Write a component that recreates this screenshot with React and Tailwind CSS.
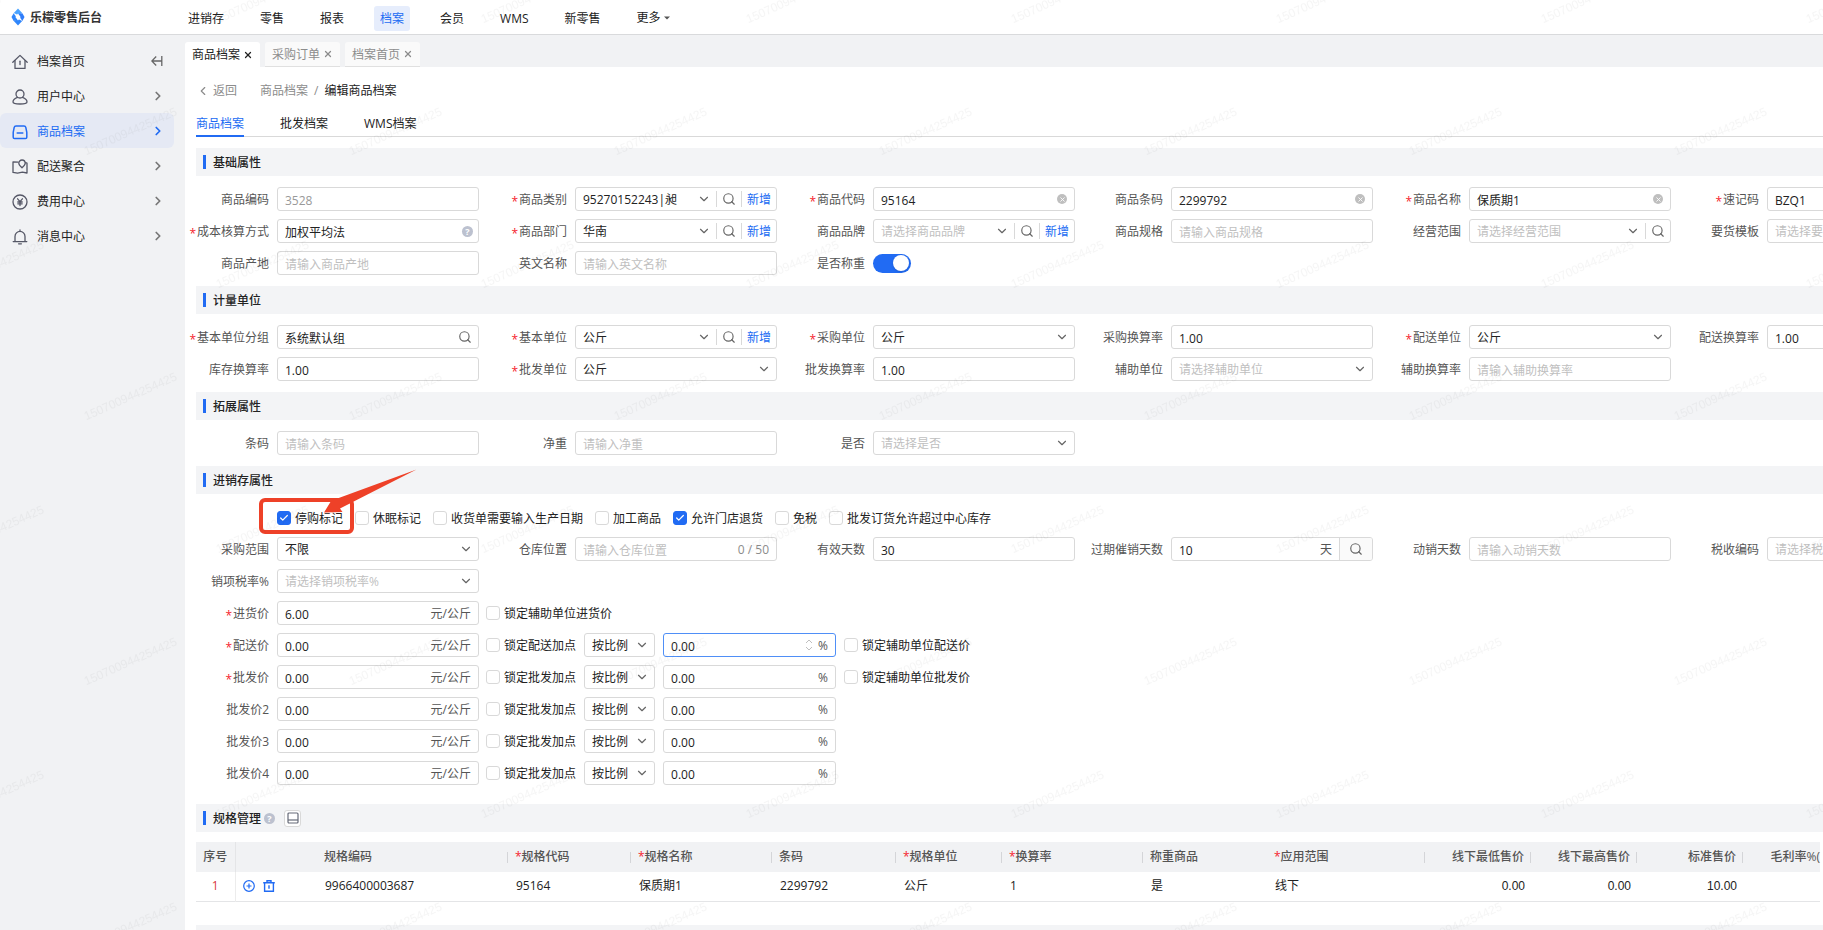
import { useId, useState } from "react";
import { ChevronDown, ChevronLeft, ChevronRight, Check, Search, X } from "lucide-react";

const NAV = ["进销存", "零售", "报表", "档案", "会员", "WMS", "新零售"];

const SIDE = [
  { label: "档案首页", icon: HomeIcon },
  { label: "用户中心", icon: UserIcon },
  { label: "商品档案", icon: BoxIcon, active: true },
  { label: "配送聚合", icon: MapIcon },
  { label: "费用中心", icon: YenIcon },
  { label: "消息中心", icon: BellIcon },
];

const PAGE_TABS = ["商品档案", "采购订单", "档案首页"];

const BASE_FIELDS = [
  { label: "商品编码", value: "3528", disabled: true },
  { label: "商品类别", required: true, kind: "select", value: "95270152243|昶", search: true, add: true },
  { label: "商品代码", required: true, value: "95164", clear: true },
  { label: "商品条码", value: "2299792", clear: true },
  { label: "商品名称", required: true, value: "保质期1", clear: true },
  { label: "速记码", required: true, value: "BZQ1" },
  { label: "成本核算方式", required: true, value: "加权平均法", help: true },
  { label: "商品部门", required: true, kind: "select", value: "华南", search: true, add: true },
  { label: "商品品牌", kind: "select", placeholder: "请选择商品品牌", search: true, add: true },
  { label: "商品规格", placeholder: "请输入商品规格" },
  { label: "经营范围", kind: "select", placeholder: "请选择经营范围", search: true },
  { label: "要货模板", kind: "select", placeholder: "请选择要货模板" },
  { label: "商品产地", placeholder: "请输入商品产地" },
  { label: "英文名称", placeholder: "请输入英文名称" },
  { label: "是否称重", kind: "switch" },
];

const UNIT_FIELDS = [
  { label: "基本单位分组", required: true, value: "系统默认组", innerSearch: true },
  { label: "基本单位", required: true, kind: "select", value: "公斤", search: true, add: true },
  { label: "采购单位", required: true, kind: "select", value: "公斤" },
  { label: "采购换算率", value: "1.00" },
  { label: "配送单位", required: true, kind: "select", value: "公斤" },
  { label: "配送换算率", value: "1.00" },
  { label: "库存换算率", value: "1.00" },
  { label: "批发单位", required: true, kind: "select", value: "公斤" },
  { label: "批发换算率", value: "1.00" },
  { label: "辅助单位", kind: "select", placeholder: "请选择辅助单位" },
  { label: "辅助换算率", placeholder: "请输入辅助换算率" },
];

const EXT_FIELDS = [
  { label: "条码", placeholder: "请输入条码" },
  { label: "净重", placeholder: "请输入净重" },
  { label: "是否", kind: "select", placeholder: "请选择是否" },
];

const FLAGS = [
  { label: "停购标记", checked: true, marked: true },
  { label: "休眠标记" },
  { label: "收货单需要输入生产日期" },
  { label: "加工商品" },
  { label: "允许门店退货", checked: true },
  { label: "免税" },
  { label: "批发订货允许超过中心库存" },
];

const STOCK_FIELDS = [
  { label: "采购范围", kind: "select", value: "不限" },
  { label: "仓库位置", placeholder: "请输入仓库位置", suffix: "0 / 50", mutedSuffix: true },
  { label: "有效天数", value: "30" },
  { label: "过期催销天数", value: "10", suffix: "天", addon: true },
  { label: "动销天数", placeholder: "请输入动销天数" },
  { label: "税收编码", kind: "select", placeholder: "请选择税收编码" },
  { label: "销项税率%", kind: "select", placeholder: "请选择销项税率%" },
];

const PRICES = [
  { label: "进货价", required: true, value: "6.00", lockUnit: "锁定辅助单位进货价" },
  { label: "配送价", required: true, value: "0.00", lock: "锁定配送加点", extra: "锁定辅助单位配送价", focused: true },
  { label: "批发价", required: true, value: "0.00", lock: "锁定批发加点", extra: "锁定辅助单位批发价" },
  { label: "批发价2", value: "0.00", lock: "锁定批发加点" },
  { label: "批发价3", value: "0.00", lock: "锁定批发加点" },
  { label: "批发价4", value: "0.00", lock: "锁定批发加点" },
];

const COLUMNS = [
  { title: "规格编码", value: "9966400003687", width: "w-[191px]", line: true },
  { title: "规格代码", value: "95164", width: "w-[123px]", required: true, line: true },
  { title: "规格名称", value: "保质期1", width: "w-[141px]", required: true, line: true },
  { title: "条码", value: "2299792", width: "w-[124px]", line: true },
  { title: "规格单位", value: "公斤", width: "w-[106px]", required: true, line: true },
  { title: "换算率", value: "1", width: "w-[141px]", required: true, line: true },
  { title: "称重商品", value: "是", width: "w-[124px]" },
  { title: "应用范围", value: "线下", width: "w-[158px]", required: true, line: true },
  { title: "线下最低售价", value: "0.00", width: "w-[106px]", right: true, line: true },
  { title: "线下最高售价", value: "0.00", width: "w-[106px]", right: true, line: true },
  { title: "标准售价", value: "10.00", width: "w-[106px]", right: true, line: true },
  { title: "毛利率%(", value: "", width: "w-[77px]", right: true },
];

/* ---------- icons ---------- */

function Stroke({ children }) {
  return (
    <svg viewBox="0 0 16 16" className="size-4 shrink-0" fill="none" stroke="currentColor" strokeWidth="1.3" strokeLinejoin="round" strokeLinecap="round" aria-hidden="true">
      {children}
    </svg>
  );
}

function HomeIcon() {
  return (
    <Stroke>
      <path d="M0.8 8.2 8 1.4l7.2 6.8" />
      <path d="M3 6.6V14.4h10V6.6" />
      <path d="M8 7.2v3.4" />
    </Stroke>
  );
}

function UserIcon() {
  return (
    <Stroke>
      <circle cx="8" cy="5" r="4" />
      <path d="M5.6 8.4C2.8 9.4 1 11.2 1 13c0 1.3 3 2 7 2s7-.7 7-2c0-1.8-1.8-3.6-4.6-4.6" />
    </Stroke>
  );
}

function BoxIcon() {
  return (
    <Stroke>
      <path d="M4 2h8c1 0 1.6.5 1.8 1.4l1 5V13.2c0 .8-.5 1.3-1.3 1.3H2.5c-.8 0-1.3-.5-1.3-1.3V8.4l1-5C2.4 2.5 3 2 4 2Z" strokeWidth="1.5" />
      <path d="M5.2 9h5.6" strokeWidth="1.5" />
    </Stroke>
  );
}

function MapIcon() {
  return (
    <Stroke>
      <path d="M6 3.200 1 3v10.400l4.600.8 4.800-1 4.600.8V4.200l-1.400-.5" />
      <path d="M10 8.800C8 7 6.800 5.800 6.800 4.200a3.200 3.200 0 0 1 6.400 0C13.200 5.800 12 7 10 8.800Z" />
    </Stroke>
  );
}

function YenIcon() {
  return (
    <Stroke>
      <circle cx="8" cy="8" r="7" />
      <path d="M5.6 4.8 8 7.6l2.4-2.8M8 7.6v4M5.8 8h4.400M5.8 9.8h4.400" />
    </Stroke>
  );
}

function BellIcon() {
  return (
    <Stroke>
      <path d="M1.2 12.6h13.6M3 12.6V7.4a5 5 0 0 1 10 0v5.2M8 2.2V1M6.6 14.8h2.8" />
    </Stroke>
  );
}

function CollapseIcon() {
  return (
    <svg viewBox="0 0 12 12" className="size-3" fill="none" stroke="#666" strokeWidth="1.3" aria-hidden="true">
      <path d="M5.2 1.5.8 6l4.4 4.5M.8 6H10.800M10.8 1v10" />
    </svg>
  );
}

function Logo() {
  return (
    <svg viewBox="0 0 14 18" className="h-[18px] w-[14px]" aria-hidden="true">
      <path d="M7 .5 11.2 5 7 7 2.8 5Z" fill="#4aa3ff" />
      <path d="M2.6 5.2 5 8.6 7 12 2.6 13 .5 9Z" fill="#2f86fb" />
      <path d="M11.4 5.2 13.5 9l-2.1 4L9 9.4 7 6Z" fill="#2f7dfa" />
      <path d="M7 17.5 2.8 13 7 11l4.2 2Z" fill="#2f86fb" />
      <path d="M7 5.4 9.6 9 7 12.6 4.4 9Z" fill="#fff" />
    </svg>
  );
}

function HelpDot() {
  return (
    <span className="flex size-[11px] shrink-0 items-center justify-center rounded-full bg-[#bcc1cf] text-[9px] leading-none font-bold text-white">
      ?
    </span>
  );
}

/* ---------- form parts ---------- */

function Label({ id, required, children }) {
  return (
    <label htmlFor={id} className="flex w-[90px] shrink-0 items-center justify-end gap-px pt-0.5 pr-2 whitespace-nowrap text-[#555]">
      {required && <span className="pt-1 leading-4 text-[#f5222d]">*</span>}
      {children}
    </label>
  );
}

function Divider() {
  return <span className="h-4 w-px shrink-0 bg-[#d9d9d9]" />;
}

function Field(props) {
  const { label, required, kind, value, placeholder, disabled, suffix, mutedSuffix, clear, help, search, add, innerSearch, addon } = props;
  const id = useId();
  const [on, setOn] = useState(true);

  if (kind === "switch") {
    return (
      <div className="flex h-6 items-center">
        <Label id={id}>{label}</Label>
        <button
          id={id}
          type="button"
          role="switch"
          aria-checked={on}
          onClick={() => setOn(!on)}
          className={on
            ? "flex h-[19px] w-[38px] items-center justify-end rounded-full bg-[#216bf3] px-[2px]"
            : "flex h-[19px] w-[38px] items-center justify-start rounded-full bg-[#bfbfbf] px-[2px]"}
        >
          <span className="size-4 rounded-full bg-white shadow" />
        </button>
      </div>
    );
  }

  return (
    <div className="flex h-6">
      <Label id={id} required={required}>{label}</Label>
      <div className="flex min-w-0 flex-1 items-center overflow-hidden rounded-[3px] border border-[#d9d9d9] bg-white">
        {kind === "select" ? (
          <>
            <select
              id={id}
              defaultValue={value || placeholder}
              className={value
                ? "h-full min-w-0 flex-1 appearance-none pt-0.5 pl-[7px] text-[#222] outline-none"
                : "h-full min-w-0 flex-1 appearance-none pt-0.5 pl-[7px] text-[#bfbfbf] outline-none"}
            >
              <option>{value || placeholder}</option>
            </select>
            <ChevronDown className="mr-[5px] size-[14px] shrink-0 text-[#666]" strokeWidth={2} />
          </>
        ) : (
          <input
            id={id}
            type="text"
            defaultValue={value}
            placeholder={placeholder}
            disabled={disabled}
            className="h-full min-w-0 flex-1 pt-0.5 pl-[7px] text-[#222] outline-none placeholder:text-[#bfbfbf] disabled:text-[#999]"
          />
        )}
        {suffix && (
          <span className={mutedSuffix ? "pt-0.5 pr-[7px] text-[#8c8c8c]" : "pt-0.5 pr-[7px] text-[#555]"}>{suffix}</span>
        )}
        {clear && (
          <button type="button" aria-label="清除" className="mr-[7px] flex size-[10px] items-center justify-center rounded-full bg-[#bfbfbf]">
            <X className="size-[7px] text-white" strokeWidth={3} />
          </button>
        )}
        {help && <span className="mr-[5px]"><HelpDot /></span>}
        {innerSearch && (
          <button type="button" aria-label="搜索" className="mr-[6px]">
            <Search className="size-[14px] text-[#666]" strokeWidth={2} />
          </button>
        )}
        {search && (
          <>
            <Divider />
            <button type="button" aria-label="搜索" className="px-[5px]">
              <Search className="size-[14px] text-[#666]" strokeWidth={2} />
            </button>
          </>
        )}
        {add && (
          <>
            <Divider />
            <button type="button" className="px-[5px] pt-0.5 text-[#216bf3]">新增</button>
          </>
        )}
        {addon && (
          <button type="button" aria-label="搜索" className="flex h-full w-[33px] items-center justify-center border-l border-[#d9d9d9] bg-[#fafafa]">
            <Search className="size-[14px] text-[#666]" strokeWidth={2} />
          </button>
        )}
      </div>
    </div>
  );
}

function FieldGrid({ fields }) {
  return (
    <div className="-ml-[9px] grid grid-cols-[repeat(6,292px)] gap-x-[6px] gap-y-2">
      {fields.map((f) => <Field key={f.label} {...f} />)}
    </div>
  );
}

function CheckBox({ label, checked, marked }) {
  return (
    <label className="relative flex shrink-0 items-center gap-1 whitespace-nowrap text-[#222]">
      <span className="relative flex size-[14px]">
        <input
          type="checkbox"
          defaultChecked={checked}
          className="peer size-[14px] appearance-none rounded-[3px] border border-[#d9d9d9] bg-white checked:border-[#216bf3] checked:bg-[#216bf3]"
        />
        <Check className="pointer-events-none absolute inset-[2px] hidden size-[10px] text-white peer-checked:block" strokeWidth={3} />
      </span>
      <span className="pt-0.5">{label}</span>
      {marked && <Callout />}
    </label>
  );
}

// red frame and arrow drawn over the first flag
function Callout() {
  return (
    <svg viewBox="0 0 160 68" width="160" height="68" className="pointer-events-none absolute -top-[40px] -left-[19px] z-10 max-w-none" aria-hidden="true">
      <rect x="3" y="33" width="91" height="32" rx="4" fill="none" stroke="#ee4128" strokeWidth="4" />
      <path d="M66 45.5 74 32.5 78 32 158.5 2.5 82 41.5 84.5 45Z" fill="#ee4128" />
    </svg>
  );
}

function SectionBar({ title, children }) {
  return (
    <div className="flex h-7 items-center gap-[7px] bg-[#f3f4f6] pl-[7px]">
      <span className="h-[14px] w-[3px] bg-[#216bf3]" />
      {title && <h2 className="pt-0.5 font-medium text-[#222]">{title}</h2>}
      {children}
    </div>
  );
}

function PriceRow({ label, required, value, lockUnit, lock, extra, focused }) {
  const id = useId();
  return (
    <div className="-ml-[9px] flex h-6 items-stretch">
      <Label id={id} required={required}>{label}</Label>
      <div className="flex w-[202px] items-center rounded-[3px] border border-[#d9d9d9] pr-[7px]">
        <input id={id} type="text" defaultValue={value} className="h-full min-w-0 flex-1 pt-0.5 pl-[7px] text-[#222] outline-none" />
        <span className="pt-0.5 text-[#555]">元/公斤</span>
      </div>
      <div className="ml-[7px] flex gap-2">
        <CheckBox label={lockUnit || lock} />
        {lock && (
          <>
            <div className="flex w-[71px] items-center rounded-[3px] border border-[#d9d9d9]">
              <select aria-label={lock + "方式"} className="h-full min-w-0 flex-1 appearance-none pt-0.5 pl-[7px] text-[#222] outline-none">
                <option>按比例</option>
              </select>
              <ChevronDown className="mr-[5px] size-[14px] shrink-0 text-[#666]" strokeWidth={2} />
            </div>
            <div className={focused
              ? "flex w-[173px] items-center rounded-[3px] border border-[#4f8ff7] pr-[7px]"
              : "flex w-[173px] items-center rounded-[3px] border border-[#d9d9d9] pr-[7px]"}
            >
              <input type="text" aria-label={lock} defaultValue="0.00" className="h-full min-w-0 flex-1 pt-0.5 pl-[7px] text-[#222] outline-none" />
              {focused && (
                <svg viewBox="0 0 8 12" className="mr-[5px] h-3 w-2" fill="none" stroke="#bfbfbf" aria-hidden="true">
                  <path d="M1 4 4 1l3 3M1 8l3 3 3-3" />
                </svg>
              )}
              <span className="pt-0.5 text-[#555]">%</span>
            </div>
          </>
        )}
        {extra && <CheckBox label={extra} />}
      </div>
    </div>
  );
}

function SpecTable() {
  return (
    <table className="mt-[10px] w-[1624px] table-fixed border-collapse text-left">
      <thead>
        <tr className="h-[30px] bg-[#f1f2f4] text-[#555]">
          <th className="w-[39px] border-r border-[#e4e5e7] p-0 text-center font-medium">序号</th>
          <th className="w-[82px] p-0" aria-label="操作" />
          {COLUMNS.map((c) => (
            <th key={c.title} className={c.width + " p-0 font-medium whitespace-nowrap"}>
              <div className={c.right
                ? "flex items-center justify-end gap-[6px]"
                : "flex items-center justify-between pl-[7px]"}
              >
                <span>
                  {c.required && <span className="text-[#f5222d]">*</span>}
                  {c.title}
                </span>
                {c.line && <span className="h-[11px] w-px bg-[#d4d5d8]" />}
              </div>
            </th>
          ))}
        </tr>
      </thead>
      <tbody>
        <tr className="h-[29px] border-b border-[#e4e5e7] text-[#222]">
          <td className="border-r border-[#ececec] p-0 text-center text-[#d9363e]">1</td>
          <td className="p-0">
            <div className="flex items-center gap-2 pl-[7px]">
              <button type="button" aria-label="新增规格">
                <svg viewBox="0 0 12 12" className="size-3" fill="none" stroke="#216bf3" strokeWidth="1.2" aria-hidden="true">
                  <circle cx="6" cy="6" r="5.3" />
                  <path d="M3.5 6h5M6 3.5v5" />
                </svg>
              </button>
              <button type="button" aria-label="删除规格">
                <svg viewBox="0 0 12 12" className="size-3" fill="none" stroke="#216bf3" strokeWidth="1.4" aria-hidden="true">
                  <path d="M.2 2.8h11.6M4 2.6V.8h4v1.8M1.600 3v8.300h8.800V3M6 5.2v3.6" />
                </svg>
              </button>
            </div>
          </td>
          {COLUMNS.map((c) => (
            <td
              key={c.title}
              className={c.right ? "p-0 pr-[6px] text-right font-['Liberation_Sans']" : "p-0 pl-2"}
            >
              {c.value}
            </td>
          ))}
        </tr>
      </tbody>
    </table>
  );
}

function Watermark() {
  return (
    <svg className="pointer-events-none absolute inset-0 z-20 size-full" aria-hidden="true">
      <defs>
        <pattern id="wm" width="265" height="265" patternUnits="userSpaceOnUse">
          <g fill="#000" fillOpacity="0.04" fontFamily="Liberation Sans" fontSize="12" textAnchor="middle">
            <text transform="translate(132 135) rotate(-24)">150700944254425</text>
            <text transform="translate(264 3) rotate(-24)">150700944254425</text>
            <text transform="translate(-1 3) rotate(-24)">150700944254425</text>
            <text transform="translate(264 268) rotate(-24)">150700944254425</text>
            <text transform="translate(-1 268) rotate(-24)">150700944254425</text>
          </g>
        </pattern>
      </defs>
      <rect width="100%" height="100%" fill="url(#wm)" />
    </svg>
  );
}

/* ---------- page ---------- */

function TopBar() {
  return (
    <header className="flex h-[35px] shrink-0 items-center border-b border-[#d9dadc] bg-white">
      <div className="flex w-[182px] shrink-0 items-center gap-[5px] pl-[11px]">
        <Logo />
        <span className="pt-0.5 font-bold text-[#333]">乐檬零售后台</span>
      </div>
      <nav className="flex items-center gap-6 pt-0.5 text-[#222]">
        {NAV.map((n) => (
          <a
            key={n}
            href="#"
            className={n === "档案"
              ? "rounded-[3px] bg-[#e6edfc] px-[6px] py-[3px] leading-[19px] text-[#216bf3]"
              : "px-[6px] leading-[19px]"}
          >
            {n}
          </a>
        ))}
        <button type="button" className="flex items-center gap-[3px] px-[6px]">
          更多
          <svg viewBox="0 0 6 4" className="h-1 w-[6px]" aria-hidden="true"><path d="M0 .5h6L3 3.5Z" fill="#555" /></svg>
        </button>
      </nav>
    </header>
  );
}

function SideBar() {
  return (
    <aside className="w-[185px] shrink-0 pt-2">
      <nav>
        {SIDE.map(({ label, icon: Icon, active }, i) => (
          <a
            key={label}
            href="#"
            className={active
              ? "mr-[11px] flex h-[35px] items-center gap-[9px] rounded-[6px] bg-[#e5e9f4] pr-[11px] pl-3 text-[#216bf3]"
              : "mr-[11px] flex h-[35px] items-center gap-[9px] pr-[11px] pl-3 text-[#222]"}
          >
            <span className={active ? "pt-0.5" : "pt-0.5 text-[#555766]"}><Icon /></span>
            <span className="flex-1 pt-0.5">{label}</span>
            {i === 0
              ? <CollapseIcon />
              : <ChevronRight className={active ? "-mr-0.5 size-[14px]" : "-mr-0.5 size-[14px] text-[#777]"} strokeWidth={3} />}
          </a>
        ))}
      </nav>
    </aside>
  );
}

export default function App() {
  return (
    <div className="relative flex h-screen flex-col overflow-hidden bg-[#f1f2f4] font-['Open_Sans','Noto_Sans_CJK_SC',sans-serif] text-[12px] leading-5">
      <TopBar />
      <div className="flex min-h-0 flex-1">
        <SideBar />
        <main className="flex min-w-0 flex-1 flex-col overflow-hidden">
          <div className="flex gap-[5px] pt-[7px]">
            {PAGE_TABS.map((t, i) => (
              <div
                key={t}
                className={i === 0
                  ? "flex h-[25px] items-center gap-[3px] rounded-t-[3px] bg-white px-[7px] text-[#222]"
                  : "flex h-[25px] items-center gap-[3px] rounded-t-[3px] border-b border-[#e0e0e0] bg-[#fafafa] px-[7px] text-[#8c8c8c]"}
              >
                <button type="button" className="pt-px">{t}</button>
                <button type="button" aria-label={"关闭" + t}>
                  <X className="size-[10px]" strokeWidth={3} />
                </button>
              </div>
            ))}
          </div>

          <div className="flex-1 overflow-hidden bg-white pt-[14px] pl-[11px]">
            <div className="flex items-center text-[#8c8c8c]">
              <button type="button" className="flex items-center gap-[3px]">
                <ChevronLeft className="size-[14px]" strokeWidth={2} />
                返回
              </button>
              <a href="#" className="ml-[23px]">商品档案</a>
              <span className="mx-[6px]">/</span>
              <span className="text-[#222]">编辑商品档案</span>
            </div>

            <div className="mt-3 flex h-6 gap-9 border-b border-[#d9d9d9] text-[#222]">
              <button type="button" className="h-6 border-b-2 border-[#216bf3] text-[#216bf3]">商品档案</button>
              <button type="button" className="h-6 border-b-2 border-transparent">批发档案</button>
              <button type="button" className="h-6 border-b-2 border-transparent">WMS档案</button>
            </div>

            <form className="mt-[11px] flex flex-col gap-[11px]">
              <SectionBar title="基础属性" />
              <FieldGrid fields={BASE_FIELDS} />
              <SectionBar title="计量单位" />
              <FieldGrid fields={UNIT_FIELDS} />
              <SectionBar title="拓展属性" />
              <FieldGrid fields={EXT_FIELDS} />
              <SectionBar title="进销存属性" />
              <div className="flex flex-col gap-2">
                <div className="flex h-6 items-center gap-3 pt-0.5 pl-[81px]">
                  {FLAGS.map((f) => <CheckBox key={f.label} {...f} />)}
                </div>
                <FieldGrid fields={STOCK_FIELDS} />
                {PRICES.map((p) => <PriceRow key={p.label} {...p} />)}
              </div>
            </form>

            <section className="mt-[19px]">
              <SectionBar>
                <h2 className="pt-0.5 font-medium text-[#222]">规格管理</h2>
                <span className="-ml-1"><HelpDot /></span>
                <button type="button" aria-label="列设置" className="ml-0.5 flex size-[17px] items-center justify-center rounded-[3px] border border-[#d9d9d9] bg-white">
                  <svg viewBox="0 0 12 12" className="size-3" fill="none" stroke="#666a78" strokeWidth="1.2" aria-hidden="true">
                    <rect x="1" y="1" width="10" height="10" rx="1" />
                    <path d="M1 8h10" />
                  </svg>
                </button>
              </SectionBar>
              <SpecTable />
            </section>

            <section className="mt-[23px]">
              <SectionBar />
            </section>
          </div>
        </main>
      </div>
      <Watermark />
    </div>
  );
}
